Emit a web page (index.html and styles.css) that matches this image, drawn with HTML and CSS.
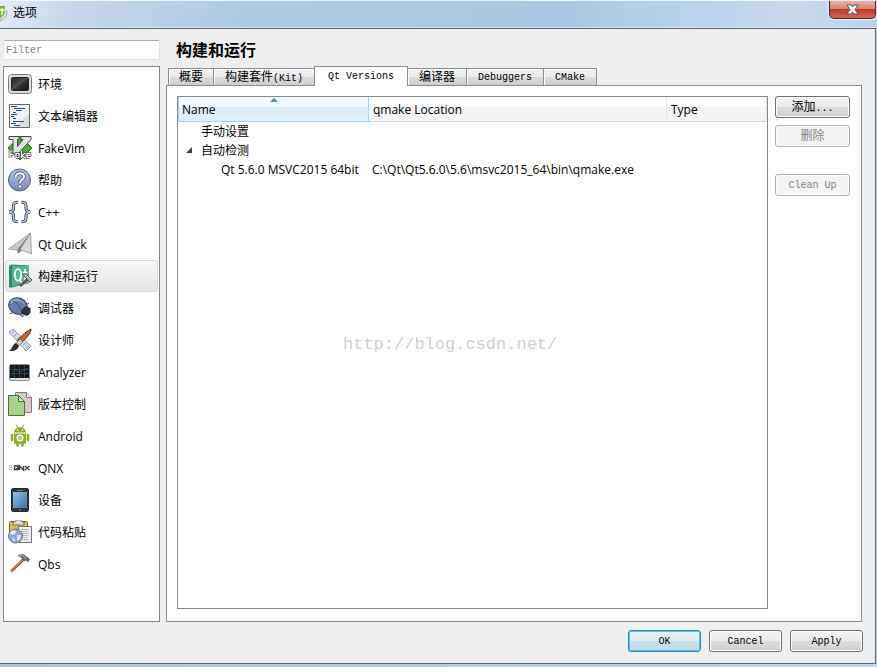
FILE: index.html
```
<!DOCTYPE html>
<html lang="zh-CN">

<head>
  <meta charset="utf-8">
  <title>选项</title>
  <link rel="stylesheet" href="styles.css">
</head>

<body>
  <div class="window">
    <header class="titlebar">
      <svg class="app-icon" width="8" height="20" viewBox="0 0 8 20">
        <path d="M0 12 L7 7 Q8 14 0 17Z" fill="#d8dadb" stroke="#a9adb0"/>
        <path d="M0 2 L5 2 L4 11 L0 14Z" fill="#6cb52d"/>
        <path d="M2 4v7M0 6h4" stroke="#fff" stroke-width="1.3"/>
      </svg>
      <span class="title">选项</span>
      <button class="close" aria-label="关闭">
        <svg width="13" height="11" viewBox="0 0 13 11">
          <path d="M1 1h4l1.500 2L8 1h4L9 5.500 12 10H8L6.500 8 5 10H1l3-4.500z" fill="#fff" stroke="#4e5263"/>
        </svg>
      </button>
    </header>

    <div class="client">
      <div class="content">
        <aside class="sidebar">
          <input class="filter" type="text" placeholder="Filter" aria-label="Filter">
          <ul class="categories">
            <li><a href="#env">
              <svg width="24" height="24" viewBox="0 0 24 24">
                <defs><linearGradient id="screen" x2="1" y2="1"><stop stop-color="#222"/><stop offset=".5" stop-color="#505050"/><stop offset=".55" stop-color="#333"/><stop offset="1" stop-color="#111"/></linearGradient></defs>
                <rect x=".5" y="2.500" width="23" height="19" rx="3" fill="#ddd" stroke="#777"/>
                <rect x="3.500" y="5.500" width="17" height="13" rx="1" fill="url(#screen)" stroke="#222"/>
              </svg>环境</a></li>
            <li><a href="#editor">
              <svg width="24" height="24" viewBox="0 0 24 24">
                <path d="M1.500 .5h20v23h-20z" fill="#f1f2f3" stroke="#666"/>
                <path d="M21 10v13H7z" fill="#dcdfe1"/>
                <path d="M3 2.500h6M6 4.500h11M8 6.500h6M5 8.500h3M3 10.500h6M3 12.500h3M5 14.500h3M5 17.500h11M3 19.500h5M6 21.500h6" stroke="#2b5089"/>
              </svg>文本编辑器</a></li>
            <li><a href="#fakevim">
              <svg width="24" height="24" viewBox="0 0 24 24">
                <path d="M12 0l12 12-12 12L0 12z" fill="#3fae2b" stroke="#2a7a1e"/>
                <path d="M1 .5h10v3H9.500v7L15 3.500h-2v-3h10v3L10 18H5V3.500H1z" fill="#e4e4e4" stroke="#444"/>
                <path d="M2 22v-7h4M2 18.500h3M8 21.500v-4h3v4H8M13.500 15v7m4-5l-3.500 2.500 3.500 2.500M22 21.500h-3v-4h3v2h-3" fill="none" stroke="#444" stroke-width="2.600"/>
                <path d="M2 22v-7h4M2 18.500h3M8 21.500v-4h3v4H8M13.500 15v7m4-5l-3.500 2.500 3.500 2.500M22 21.500h-3v-4h3v2h-3" fill="none" stroke="#fff" stroke-width="1.200"/>
              </svg>FakeVim</a></li>
            <li><a href="#help">
              <svg width="24" height="24" viewBox="0 0 24 24">
                <defs><linearGradient id="help" x2="0" y2="1"><stop stop-color="#b9c8e5"/><stop offset="1" stop-color="#7189ba"/></linearGradient></defs>
                <circle cx="11.500" cy="12" r="11" fill="url(#help)" stroke="#4a5c82"/>
                <path d="M7.500 9.500c0-6 9-5.500 8.500-.5-.3 3-4 3-4 6" fill="none" stroke="#4a5c82" stroke-width="3.600"/>
                <path d="M7.500 9.500c0-6 9-5.500 8.500-.5-.3 3-4 3-4 6" fill="none" stroke="#fff" stroke-width="2"/>
                <circle cx="12" cy="18.500" r="1.700" fill="#fff" stroke="#4a5c82" stroke-width=".8"/>
              </svg>帮助</a></li>
            <li><a href="#cpp">
              <svg width="24" height="24" viewBox="0 0 24 24" fill="none">
                <path d="M10 2.500C5.500 2 5.500 4 5.500 7s0 4-4 5c4 1 4 2 4 5s0 5 4.500 4.500M13.500 2.500C18 2 18 4 18 7s0 4 4 5c-4 1-4 2-4 5s0 5-4.500 4.500" stroke="#43536e" stroke-width="3.200"/>
                <path d="M10 2.500C5.500 2 5.500 4 5.500 7s0 4-4 5c4 1 4 2 4 5s0 5 4.500 4.500M13.500 2.500C18 2 18 4 18 7s0 4 4 5c-4 1-4 2-4 5s0 5-4.500 4.500" stroke="#c2cee0" stroke-width="1.300"/>
              </svg>C++</a></li>
            <li><a href="#quick">
              <svg width="24" height="24" viewBox="0 0 24 24">
                <path d="M22.500 1L.5 17l9 1z" fill="#c9c9c9" stroke="#8a8a8a" stroke-width=".7"/>
                <path d="M22.500 1l-13 17 .5 4 3-3z" fill="#777"/>
                <path d="M22.500 1l1 21L12 17.500z" fill="#d8d8d8" stroke="#858585" stroke-width=".7"/>
              </svg>Qt Quick</a></li>
            <li><a class="selected" href="#build">
              <svg width="24" height="24" viewBox="0 0 24 24">
                <path d="M1 2L3 .5 21 1.500V19L4 23.500H1z" fill="#2b8872"/>
                <path d="M4 2l17 0v17L4 22z" fill="#57b38e"/>
                <ellipse cx="10" cy="11" rx="3.200" ry="5.800" fill="none" stroke="#fff" stroke-width="1.800"/>
                <path d="M11 15l3 4M17 5v9c0 2 1 2 2 2M14.500 8.500h5" fill="none" stroke="#fff" stroke-width="1.700"/>
                <path d="M12 22l8-7" stroke="#714b40" stroke-width="2.500"/>
                <path d="M14 10l4 0 6 6-2 2z" fill="#aebbc3" stroke="#4d5963"/>
              </svg>构建和运行</a></li>
            <li><a href="#debugger">
              <svg width="24" height="24" viewBox="0 0 24 24">
                <path d="M5 16l-3 2M13 18l0 2 3 0M19 17l2 2M20 13l3-1M18 9l3-2" fill="none" stroke="#2c3340"/>
                <ellipse cx="10" cy="10" rx="9.500" ry="8" transform="rotate(22 10 10)" fill="#667ca9" stroke="#354465"/>
                <path d="M2 6c4-6 13-3 15 3C12 4 7 4 2 8z" fill="#93a6cb"/>
                <path d="M5 5c5 2 7 6 9 12" fill="none" stroke="#3e4f75"/>
                <path d="M14 17c0-7 7-8 8-3s-4 7-8 3z" fill="#303744" stroke="#1e232e"/>
              </svg>调试器</a></li>
            <li><a href="#designer">
              <svg width="24" height="24" viewBox="0 0 24 24">
                <path d="M1 4l4-3 18 17-5 5z" fill="#d8dfec" stroke="#8996b0"/>
                <path d="M6 3L4 5m5 1L6 8m6 1l-3 2m6 1l-2 2m5 1l-3 2m6 1l-3 2" stroke="#8996b0"/>
                <path d="M23 1c1 3-7 12-11 15l-3-3C14 7 20 2 23 1z" fill="#bc6834" stroke="#633016"/>
                <path d="M12 11l3 3-4 4-3-3z" fill="#ccc" stroke="#6a6a6a" stroke-width=".7"/>
                <path d="M8 15l3 3c-2 5-6 5-10 5 4-2 3-7 7-8z" fill="#382820"/>
              </svg>设计师</a></li>
            <li><a href="#analyzer">
              <svg width="24" height="24" viewBox="0 0 24 24">
                <rect x="1.500" y="4.500" width="20" height="16" rx="1.500" fill="#ddd" stroke="#888"/>
                <path d="M2 5h19v13H2z" fill="#111820"/>
                <path d="M6.500 5v13M11.500 5v13M16.500 5v13M2 9.500h19M2 13.500h19" stroke="#345460" stroke-width=".7"/>
                <path d="M4 16l3-7 4 3 5-2 4-2" fill="none" stroke="#486875" stroke-width=".6"/>
              </svg>Analyzer</a></li>
            <li><a href="#vcs">
              <svg width="24" height="24" viewBox="0 0 24 24">
                <path d="M7.500 .5h11l5 5v15h-16z" fill="#dac8c8" stroke="#8c7474"/>
                <path d="M18.500 .5v5h5" fill="#f3e8e8" stroke="#8c7474"/>
                <path d="M.5 3.500h10l6 6v14H.5z" fill="#a7d28b" stroke="#4b7042"/>
                <path d="M10.500 3.500v6h6z" fill="#dceecf" stroke="#4b7042"/>
              </svg>版本控制</a></li>
            <li><a href="#android">
              <svg width="24" height="24" viewBox="0 0 24 24">
                <path d="M8 1l2 3M16 1l-2 3" stroke="#849b3b"/>
                <path d="M6 8.500c0-7 12-7 12 0z" fill="#8dab25"/>
                <path d="M6 9.500h12v9q0 1.500-1.500 1.500h-9Q6 20 6 18.500z" fill="#8dab25"/>
                <path d="M4 11v5M20 11v5M9.500 19v2.500M14.500 19v2.500" stroke="#8dab25" stroke-width="2.600" stroke-linecap="round"/>
                <circle cx="9.500" cy="6" r=".8" fill="#fff"/><circle cx="14.500" cy="6" r=".8" fill="#fff"/>
                <circle cx="12" cy="14" r="3.500" fill="#fff"/><path d="M10.500 13l1.500-1 1.500 1v2L12 16l-1.500-1z" fill="#bdc98b" stroke="#8da04e" stroke-width=".5"/>
              </svg>Android</a></li>
            <li><a href="#qnx">
              <svg width="24" height="24" viewBox="0 0 24 24" fill="none">
                <path d="M1 9.500h1m1 0h1M2 11.500h2M1 13.500h1m1 0h1" stroke="#999"/>
                <path d="M10 10H6.500v3.500H10zM8.500 12l2 2M11.500 14v-4l4 4v-4M17 10l4.500 4m0-4L17 14" stroke="#444" stroke-width="1.500"/>
              </svg>QNX</a></li>
            <li><a href="#devices">
              <svg width="24" height="24" viewBox="0 0 24 24">
                <defs><linearGradient id="tablet" x2="1" y2="1"><stop stop-color="#92c2e7"/><stop offset="1" stop-color="#3771a7"/></linearGradient></defs>
                <rect x="3.500" y=".5" width="17" height="23" rx="1.500" fill="#30353a" stroke="#24282c"/>
                <path d="M5 4h14v16H5z" fill="url(#tablet)"/>
                <path d="M9 2.500h6" stroke="#777"/><path d="M11 22h2" stroke="#888"/>
              </svg>设备</a></li>
            <li><a href="#paste">
              <svg width="24" height="24" viewBox="0 0 24 24">
                <rect x="1.500" y="1.500" width="18" height="18" rx="1" fill="#e0bd35" stroke="#826715"/>
                <path d="M5 2h2c0-3 7-3 7 0h2v3H5z" fill="#ddd" stroke="#777"/>
                <path d="M10.500 6.500h13v16h-13z" fill="#eee" stroke="#777"/>
                <path d="M13 9.500h8M13 11.500h7M13 13.500h8M14 15.500h6M15 17.500h4M15 19.500h5" stroke="#aaa" stroke-width=".8"/>
                <circle cx="7.500" cy="16" r="7" fill="#8ea8d2" stroke="#5f779f"/>
                <path d="M3 11l4-1 1 3-3 2-3-1zM9 15l4 0-1 4-3 2zM4 18l3 1-1 3z" fill="#e9eff8"/>
              </svg>代码粘贴</a></li>
            <li><a href="#qbs">
              <svg width="24" height="24" viewBox="0 0 24 24">
                <path d="M4 18.500L16 7" stroke="#9b5534" stroke-width="2.800" stroke-linecap="round"/>
                <path d="M4 18L15 7.500" stroke="#d77e46" stroke-width="1.200" stroke-linecap="round"/>
                <path d="M10 3.500c4-2 6-1 8 1l3.500 2.500-1.500 3-2-2-2 1-2.500-3.500z" fill="#656b70" stroke="#43484c" stroke-width=".6"/>
                <path d="M11 3.500c3-1 5 1 7 3" stroke="#bbc1c5" fill="none"/>
              </svg>Qbs</a></li>
          </ul>
        </aside>

        <main class="page">
          <h1>构建和运行</h1>
          <div class="tabs" role="tablist">
            <button class="tab" role="tab"><span class="cjk">概要</span></button>
            <button class="tab" role="tab"><span class="cjk">构建套件</span>(Kit)</button>
            <button class="tab active" role="tab" aria-selected="true">Qt Versions</button>
            <button class="tab" role="tab"><span class="cjk">编译器</span></button>
            <button class="tab" role="tab">Debuggers</button>
            <button class="tab" role="tab">CMake</button>
          </div>
          <section class="panel">
            <div class="tree">
              <table>
                <colgroup><col class="col-name"><col class="col-location"><col></colgroup>
                <thead>
                  <tr><th class="sorted">Name</th><th>qmake Location</th><th>Type</th></tr>
                </thead>
                <tbody>
                  <tr><td class="group">手动设置</td><td></td><td></td></tr>
                  <tr>
                    <td class="group expanded">
                      <svg class="arrow" width="6" height="6" viewBox="0 0 6 6"><path d="M6 0v6H0z" fill="#404040"/></svg>自动检测</td>
                    <td></td><td></td>
                  </tr>
                  <tr><td class="version">Qt 5.6.0 MSVC2015 64bit</td><td>C:\Qt\Qt5.6.0\5.6\msvc2015_64\bin\qmake.exe</td><td></td></tr>
                </tbody>
              </table>
              <span class="watermark">http://blog.csdn.net/</span>
            </div>
            <div class="actions">
              <button class="btn"><span class="cjk">添加</span>...</button>
              <button class="btn" disabled><span class="cjk">删除</span></button>
              <button class="btn cleanup" disabled>Clean Up</button>
            </div>
          </section>
        </main>
      </div>

      <footer class="buttons">
        <button class="btn default">OK</button>
        <button class="btn">Cancel</button>
        <button class="btn">Apply</button>
      </footer>
    </div>
  </div>
</body>

</html>
```
FILE: styles.css
```
* {
  box-sizing: border-box;
}
body {
  margin: 0;
  font-family: "Open Sans", "Noto Sans CJK SC", sans-serif;
  font-size: 12px;
  color: #000;
}
button, input {
  font-family: "Liberation Mono", "Noto Sans CJK SC", monospace;
  font-size: 10px;
  color: #000;
}
.cjk {
  font-size: 12px;
}

/* window frame */
.window {
  display: flex;
  flex-direction: column;
  min-height: 100vh;
  padding: 0 1px 3px 0;
  background: linear-gradient(90deg, #a6c4e4, #b9d4ee);
}
.titlebar {
  display: flex;
  height: 28px;
  border-top: 1px solid #f3f8fc;
  border-bottom: 1px solid #d9e7f4;
  background: linear-gradient(100deg, #e2ecf6 0, #c5d7ea 8%, #adc9e4 28%, #a9c7e4 65%, #b9d3ee 80%, #c8d9ea 90%, #b9d4ee 100%);
}
.app-icon {
  margin-top: 3px;
}
.title {
  margin-left: 5px;
  line-height: 24px;
}
.close {
  display: flex;
  justify-content: center;
  align-items: center;
  width: 47px;
  height: 18px;
  margin-left: auto;
  padding: 0;
  border: 1px solid #56222a;
  border-top: 0;
  border-radius: 0 0 5px 5px;
  background: linear-gradient(#e9b0a6, #d98272 45%, #bd3a24 50%, #d0685a);
  box-shadow: 0 0 1px 1px #e5eff8;
}

/* dialog */
.client {
  display: flex;
  flex: 1;
  flex-direction: column;
  border: 1px solid #5b6675;
  border-left: 0;
  background: #efefef;
}
.content {
  display: flex;
  flex: 1;
  gap: 6px;
  padding: 11px 13px 0 3px;
}
.sidebar {
  display: flex;
  flex-direction: column;
  gap: 6px;
  width: 157px;
}
.filter {
  height: 20px;
  padding: 0 2px;
  border: 1px solid #e2e3ea;
  border-top-color: #abadb3;
  border-radius: 2px;
  background: #fff;
}
.filter::placeholder {
  color: #7f7f7f;
}
.categories {
  flex: 1;
  margin: 0;
  padding: 1px;
  border: 1px solid #828790;
  background: #fff;
  list-style: none;
}
.categories a {
  display: flex;
  align-items: center;
  gap: 6px;
  height: 32px;
  padding-left: 2px;
  border: 1px solid transparent;
  border-radius: 3px;
  color: #000;
  text-decoration: none;
}
.categories a.selected {
  border-color: #d9d9d9;
  background: linear-gradient(#f8f8f8, #e5e5e5);
}

/* options page */
.page {
  display: flex;
  flex: 1;
  flex-direction: column;
}
h1 {
  margin: 0 0 6px 10px;
  font-size: 16px;
  line-height: 20px;
}
.tabs {
  display: flex;
  align-items: flex-end;
  height: 20px;
  padding-left: 2px;
}
.tab {
  height: 18px;
  padding: 1px 11px 0;
  border: 1px solid #898c95;
  border-left-width: 0;
  background: linear-gradient(#f3f3f3, #ebebeb 50%, #dddddd 50%, #cdcdcd);
  box-shadow: inset 1px 1px #fcfcfc;
  line-height: 16px;
  white-space: nowrap;
}
.tab:first-child {
  padding: 1px 10px 0;
  border-left-width: 1px;
}
.tab.active {
  z-index: 1;
  height: 20px;
  margin-left: -1px;
  padding: 0 13px;
  border-bottom: 0;
  border-left-width: 1px;
  background: #fff;
}
.panel {
  display: flex;
  flex: 1;
  gap: 7px;
  margin-top: -1px;
  padding: 10px 11px 12px 10px;
  border: 1px solid #898c95;
  background: #fff;
}
.tree {
  position: relative;
  flex: 1;
  border: 1px solid #828790;
}
table {
  width: 100%;
  border-collapse: separate;
  border-spacing: 0;
  table-layout: fixed;
}
.col-name {
  width: 191px;
}
.col-location {
  width: 298px;
}
th {
  height: 25px;
  padding: 1px 4px 0;
  border-right: 1px solid #e3e8ee;
  border-bottom: 1px solid #d5d5d5;
  background: linear-gradient(#fff 40%, #f3f4f6 40%);
  font-weight: normal;
  text-align: left;
}
th.sorted {
  position: relative;
  padding-left: 3px;
  border: 1px solid #96d9f9;
  border-top: 0;
  background: linear-gradient(#f2f9fc 40%, #d8ecf6 40%, #e1f1f9);
}
th.sorted::after {
  position: absolute;
  top: 1px;
  left: 48%;
  border: 4px solid transparent;
  border-top: 0;
  border-bottom: 4px solid #5a8ba8;
  content: "";
}
td {
  height: 19px;
  padding: 0 3px;
  line-height: 19px;
  white-space: nowrap;
}
td.group {
  padding-left: 23px;
}
td.expanded {
  position: relative;
}
.arrow {
  position: absolute;
  top: 6px;
  left: 8px;
}
td.version {
  padding: 0 0 0 43px;
}
.watermark {
  position: absolute;
  top: 238px;
  left: 165px;
  color: #d0d0d0;
  font-family: "Liberation Mono", monospace;
  font-size: 17px;
  line-height: 20px;
}

/* push buttons */
.btn {
  width: 75px;
  height: 22px;
  padding: 2px 0 0;
  border: 1px solid #707070;
  border-radius: 3px;
  background: linear-gradient(#f2f2f2, #ebebeb 50%, #dddddd 50%, #cfcfcf);
  box-shadow: inset 0 0 0 1px #fcfcfc;
  line-height: 18px;
}
.btn:disabled {
  border-color: #adb2b5;
  background: #f4f4f4;
  color: #838383;
}
.btn.default {
  border-color: #3c7fb1;
  background: linear-gradient(#eaf3f8, #dfeef6 50%, #c9e0ed 50%, #c0d9e8);
  box-shadow: inset 0 0 0 1px #48c8f2;
}
.actions {
  display: flex;
  flex-direction: column;
  gap: 7px;
}
.cleanup {
  margin-top: 20px;
}
.buttons {
  display: flex;
  justify-content: flex-end;
  gap: 8px;
  padding: 8px 12px 11px;
}
.buttons .btn {
  width: 73px;
}
```
